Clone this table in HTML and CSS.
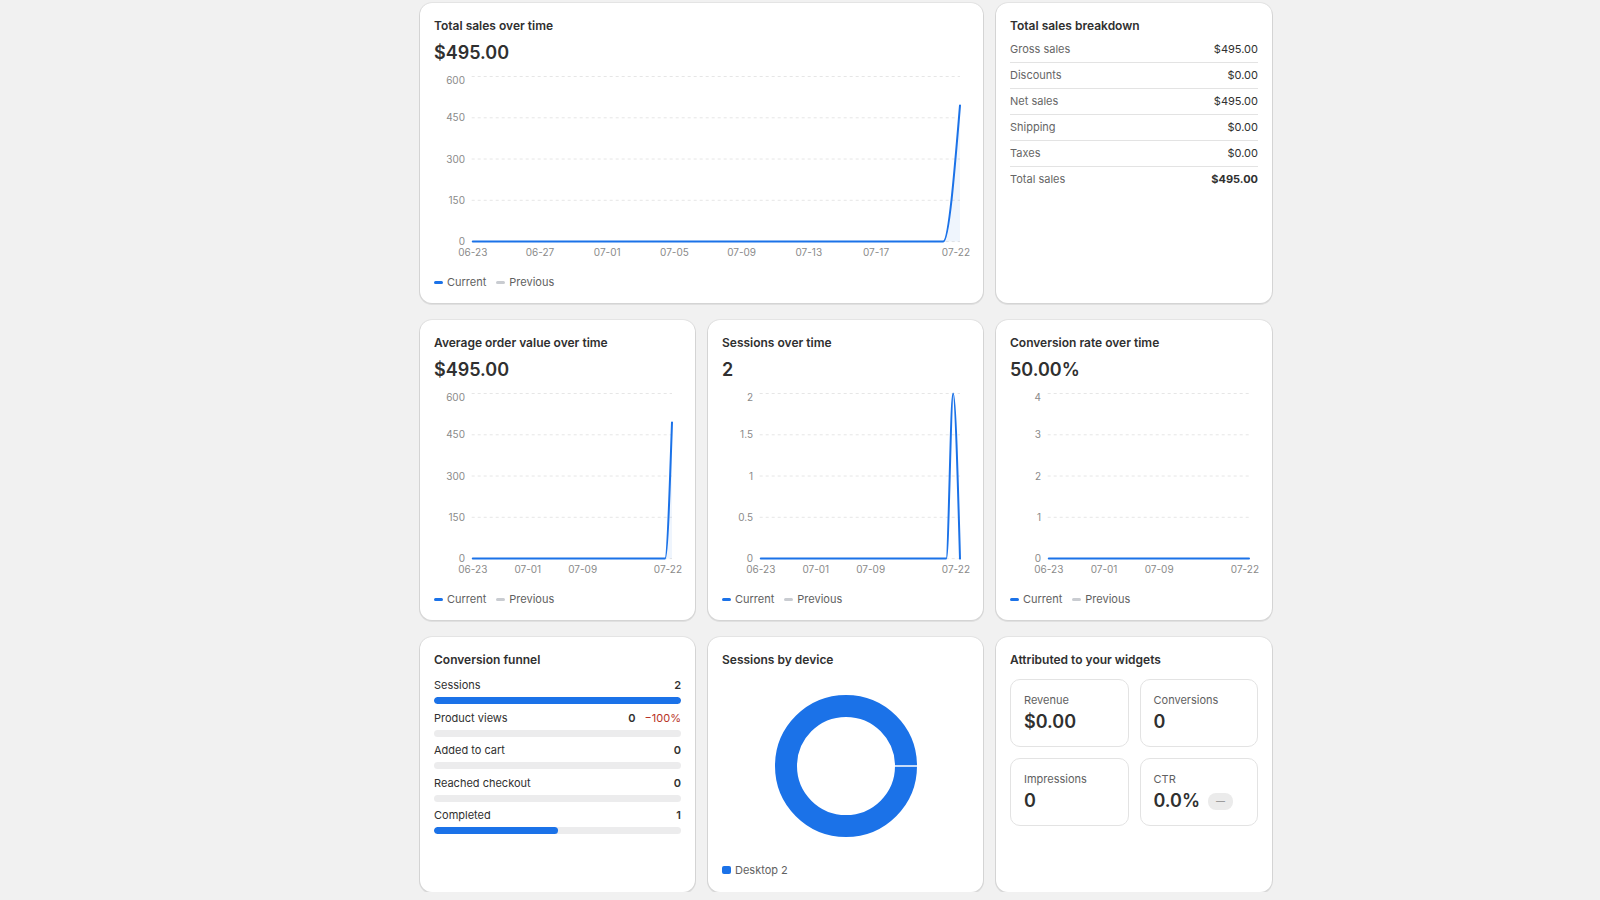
FILE: index.html
```html
<!DOCTYPE html>
<html lang="en">
<head>
<meta charset="utf-8">
<title>Analytics</title>
<link rel="stylesheet" href="styles.css">
</head>
<body>
<main class="page">

  <section class="card span2">
    <div class="title">Total sales over time</div>
    <div class="value">$495.00</div>
    <svg class="chart" width="535" height="196" viewBox="0 0 535 196">
      <g class="grid">
        <line x1="37.7" y1="11.5" x2="526" y2="11.5"/>
        <line x1="37.7" y1="52.8" x2="526" y2="52.8"/>
        <line x1="37.7" y1="94" x2="526" y2="94"/>
        <line x1="37.7" y1="135.3" x2="526" y2="135.3"/>
        <line x1="37.7" y1="176.6" x2="526" y2="176.6"/>
      </g>
      <g class="ylab">
        <text x="31" y="19.1">600</text>
        <text x="31" y="56.4">450</text>
        <text x="31" y="97.6">300</text>
        <text x="31" y="138.9">150</text>
        <text x="31" y="180.2">0</text>
      </g>
      <path class="area" d="M38.8,176.6 L509.2,176.6 C514.8,176.6 520.4,108.5 526,40.4 L526,176.6 Z"/>
      <path class="line" d="M38.8,176.6 L509.2,176.6 C514.8,176.6 520.4,108.5 526,40.4"/>
      <g class="xlab">
        <text x="38.8" y="190.9">06-23</text>
        <text x="106" y="190.9">06-27</text>
        <text x="173.2" y="190.9">07-01</text>
        <text x="240.4" y="190.9">07-05</text>
        <text x="307.6" y="190.9">07-09</text>
        <text x="374.8" y="190.9">07-13</text>
        <text x="442" y="190.9">07-17</text>
        <text class="end" x="536" y="190.9">07-22</text>
      </g>
    </svg>
    <div class="legend">
      <span class="legend-item"><i class="sw-line"></i>Current</span>
      <span class="legend-item"><i class="sw-line prev"></i>Previous</span>
    </div>
  </section>

  <section class="card">
    <div class="title">Total sales breakdown</div>
    <div class="bd-list">
      <div class="bd-row"><span class="bd-label">Gross sales</span><span class="bd-val">$495.00</span></div>
      <div class="bd-row"><span class="bd-label">Discounts</span><span class="bd-val">$0.00</span></div>
      <div class="bd-row"><span class="bd-label">Net sales</span><span class="bd-val">$495.00</span></div>
      <div class="bd-row"><span class="bd-label">Shipping</span><span class="bd-val">$0.00</span></div>
      <div class="bd-row"><span class="bd-label">Taxes</span><span class="bd-val">$0.00</span></div>
      <div class="bd-row"><span class="bd-label">Total sales</span><span class="bd-val strong">$495.00</span></div>
    </div>
  </section>

  <section class="card">
    <div class="title">Average order value over time</div>
    <div class="value">$495.00</div>
    <svg class="chart" width="247" height="196" viewBox="0 0 247 196">
      <g class="grid">
        <line x1="37.7" y1="11.5" x2="238" y2="11.5"/>
        <line x1="37.7" y1="52.8" x2="238" y2="52.8"/>
        <line x1="37.7" y1="94" x2="238" y2="94"/>
        <line x1="37.7" y1="135.3" x2="238" y2="135.3"/>
        <line x1="37.7" y1="176.6" x2="238" y2="176.6"/>
      </g>
      <g class="ylab">
        <text x="31" y="19.1">600</text>
        <text x="31" y="56.4">450</text>
        <text x="31" y="97.6">300</text>
        <text x="31" y="138.9">150</text>
        <text x="31" y="180.2">0</text>
      </g>
      <path class="area" d="M38.8,176.6 L231.1,176.6 C233.4,176.6 235.7,108.5 238,40.4 L238,176.6 Z"/>
      <path class="line" d="M38.8,176.6 L231.1,176.6 C233.4,176.6 235.7,108.5 238,40.4"/>
      <g class="xlab">
        <text x="38.8" y="190.9">06-23</text>
        <text x="93.75" y="190.9">07-01</text>
        <text x="148.7" y="190.9">07-09</text>
        <text class="end" x="248" y="190.9">07-22</text>
      </g>
    </svg>
    <div class="legend">
      <span class="legend-item"><i class="sw-line"></i>Current</span>
      <span class="legend-item"><i class="sw-line prev"></i>Previous</span>
    </div>
  </section>

  <section class="card">
    <div class="title">Sessions over time</div>
    <div class="value">2</div>
    <svg class="chart" width="247" height="196" viewBox="0 0 247 196">
      <g class="grid">
        <line x1="37.7" y1="11.5" x2="238" y2="11.5"/>
        <line x1="37.7" y1="52.8" x2="238" y2="52.8"/>
        <line x1="37.7" y1="94" x2="238" y2="94"/>
        <line x1="37.7" y1="135.3" x2="238" y2="135.3"/>
        <line x1="37.7" y1="176.6" x2="238" y2="176.6"/>
      </g>
      <g class="ylab">
        <text x="31" y="19.1">2</text>
        <text x="31" y="56.4">1.5</text>
        <text x="31" y="97.6">1</text>
        <text x="31" y="138.9">0.5</text>
        <text x="31" y="180.2">0</text>
      </g>
      <path class="line" d="M38.8,176.6 L224.3,176.6 C226.6,176.6 228.8,11.5 231.1,11.5 C233.4,11.5 235.7,94 238,176.6"/>
      <g class="xlab">
        <text x="38.8" y="190.9">06-23</text>
        <text x="93.75" y="190.9">07-01</text>
        <text x="148.7" y="190.9">07-09</text>
        <text class="end" x="248" y="190.9">07-22</text>
      </g>
    </svg>
    <div class="legend">
      <span class="legend-item"><i class="sw-line"></i>Current</span>
      <span class="legend-item"><i class="sw-line prev"></i>Previous</span>
    </div>
  </section>

  <section class="card">
    <div class="title">Conversion rate over time</div>
    <div class="value">50.00%</div>
    <svg class="chart" width="248" height="196" viewBox="0 0 248 196">
      <g class="grid">
        <line x1="37.7" y1="11.5" x2="239" y2="11.5"/>
        <line x1="37.7" y1="52.8" x2="239" y2="52.8"/>
        <line x1="37.7" y1="94" x2="239" y2="94"/>
        <line x1="37.7" y1="135.3" x2="239" y2="135.3"/>
        <line x1="37.7" y1="176.6" x2="239" y2="176.6"/>
      </g>
      <g class="ylab">
        <text x="31" y="19.1">4</text>
        <text x="31" y="56.4">3</text>
        <text x="31" y="97.6">2</text>
        <text x="31" y="138.9">1</text>
        <text x="31" y="180.2">0</text>
      </g>
      <path class="line" d="M38.8,176.6 L239,176.6"/>
      <g class="xlab">
        <text x="38.8" y="190.9">06-23</text>
        <text x="94" y="190.9">07-01</text>
        <text x="149.2" y="190.9">07-09</text>
        <text class="end" x="249" y="190.9">07-22</text>
      </g>
    </svg>
    <div class="legend">
      <span class="legend-item"><i class="sw-line"></i>Current</span>
      <span class="legend-item"><i class="sw-line prev"></i>Previous</span>
    </div>
  </section>

  <section class="card">
    <div class="title">Conversion funnel</div>
    <div class="funnel">
      <div class="f-row">
        <div class="f-head"><span>Sessions</span><span class="f-right"><b>2</b></span></div>
        <div class="track"><div class="fill" style="width:100%"></div></div>
      </div>
      <div class="f-row">
        <div class="f-head"><span>Product views</span><span class="f-right"><b>0</b><span class="neg">−100%</span></span></div>
        <div class="track"><div class="fill" style="width:0%"></div></div>
      </div>
      <div class="f-row">
        <div class="f-head"><span>Added to cart</span><span class="f-right"><b>0</b></span></div>
        <div class="track"><div class="fill" style="width:0%"></div></div>
      </div>
      <div class="f-row">
        <div class="f-head"><span>Reached checkout</span><span class="f-right"><b>0</b></span></div>
        <div class="track"><div class="fill" style="width:0%"></div></div>
      </div>
      <div class="f-row">
        <div class="f-head"><span>Completed</span><span class="f-right"><b>1</b></span></div>
        <div class="track"><div class="fill" style="width:50%"></div></div>
      </div>
    </div>
  </section>

  <section class="card device">
    <div class="title">Sessions by device</div>
    <div class="donut-wrap">
      <svg class="donut" width="144" height="144" viewBox="0 0 144 144">
        <circle cx="72" cy="72" r="60" fill="none" stroke="#1b72e8" stroke-width="22"/>
        <line x1="120" y1="72" x2="144" y2="72" stroke="#ffffff" stroke-width="1.5"/>
      </svg>
    </div>
    <div class="legend dev">
      <span class="legend-item"><i class="sw-sq"></i>Desktop 2</span>
    </div>
  </section>

  <section class="card">
    <div class="title">Attributed to your widgets</div>
    <div class="tiles">
      <div class="tile"><div class="t-label">Revenue</div><div class="t-value">$0.00</div></div>
      <div class="tile"><div class="t-label">Conversions</div><div class="t-value">0</div></div>
      <div class="tile"><div class="t-label">Impressions</div><div class="t-value">0</div></div>
      <div class="tile"><div class="t-label">CTR</div><div class="t-value">0.0%<span class="badge">—</span></div></div>
    </div>
  </section>

</main>
</body>
</html>
```

FILE: styles.css
```css
* { box-sizing: border-box; }

body {
  margin: 0;
  background: #f1f1f1;
  font-family: Inter, "Noto Sans", "Liberation Sans", sans-serif;
  color: #303030;
}

.page {
  margin-left: 420px;
  padding-top: 3px;
  width: 852px;
  display: grid;
  grid-template-columns: 275px 275px 276px;
  column-gap: 13px;
  row-gap: 17px;
}

.card {
  background: #ffffff;
  border-radius: 12px;
  padding: 15px 14px 14px;
  box-shadow: 0 0 0 1px rgba(0, 0, 0, 0.05), 0 1px 0 1px rgba(0, 0, 0, 0.07);
}

.span2 { grid-column: span 2; }

.title {
  font-size: 12px;
  font-weight: 600;
  line-height: 16px;
  color: #303030;
}

.value {
  font-size: 18px;
  font-weight: 600;
  line-height: 24px;
  margin-top: 7px;
  color: #303030;
}

.chart { display: block; overflow: visible; }

.chart .grid line {
  stroke: #e6e6e6;
  stroke-width: 1;
  stroke-dasharray: 3 3;
}

.chart text {
  font-family: Inter, "Noto Sans", sans-serif;
  font-size: 10px;
  fill: #8a8a8a;
}

.chart .ylab text { text-anchor: end; }
.chart .xlab text { text-anchor: middle; }
.chart .xlab text.end { text-anchor: end; }

.chart .line {
  fill: none;
  stroke: #1b72e8;
  stroke-width: 2;
  stroke-linejoin: round;
  stroke-linecap: round;
}

.chart .area {
  fill: rgba(27, 114, 232, 0.07);
  stroke: none;
}

.legend {
  display: flex;
  align-items: center;
  gap: 10px;
  margin-top: 14px;
  font-size: 11px;
  line-height: 14px;
  color: #616161;
}

.legend-item {
  display: flex;
  align-items: center;
  gap: 4.5px;
}

.sw-line {
  display: block;
  width: 8.5px;
  height: 3px;
  border-radius: 2px;
  background: #1b72e8;
}

.sw-line.prev { background: #c9ccd1; }

.sw-sq {
  display: block;
  width: 8.5px;
  height: 8.5px;
  border-radius: 2px;
  background: #1b72e8;
}

/* breakdown */
.bd-list { margin-top: 3px; }

.bd-row {
  display: flex;
  justify-content: space-between;
  font-size: 11px;
  line-height: 25px;
}

.bd-row + .bd-row { border-top: 1px solid #e3e3e3; }

.bd-label { color: #666666; }
.bd-val { color: #303030; }
.bd-val.strong { font-weight: 700; }

/* funnel */
.funnel {
  margin-top: 10px;
  display: flex;
  flex-direction: column;
  gap: 6.5px;
}

.f-head {
  display: flex;
  justify-content: space-between;
  font-size: 11px;
  line-height: 14px;
  color: #303030;
}

.f-right {
  display: flex;
  gap: 9px;
}

.f-right b { font-weight: 600; }

.neg { color: #b8321f; }

.track {
  margin-top: 5px;
  height: 7px;
  border-radius: 4px;
  background: #ececed;
  overflow: hidden;
}

.fill {
  height: 100%;
  border-radius: 4px;
  background: #1b72e8;
}

/* device */
.card.device { padding-bottom: 15px; }

.donut-wrap {
  display: flex;
  justify-content: center;
  padding: 26px 0 25px;
}

.donut { display: block; }

.legend.dev { margin-top: 0; }

/* widgets */
.tiles {
  margin-top: 11px;
  display: grid;
  grid-template-columns: 1fr 1fr;
  gap: 11px;
}

.tile {
  border: 1px solid #e3e3e3;
  border-radius: 10px;
  padding: 13px 13px;
}

.t-label {
  font-size: 11px;
  line-height: 14px;
  color: #616161;
}

.t-value {
  margin-top: 4px;
  font-size: 18px;
  font-weight: 600;
  line-height: 22px;
  color: #303030;
  display: flex;
  align-items: center;
  gap: 8px;
}

.badge {
  display: inline-flex;
  align-items: center;
  justify-content: center;
  width: 25px;
  height: 17px;
  border-radius: 8px;
  background: #ebebeb;
  color: #8a8a8a;
  font-size: 9px;
  font-weight: 400;
}
```
